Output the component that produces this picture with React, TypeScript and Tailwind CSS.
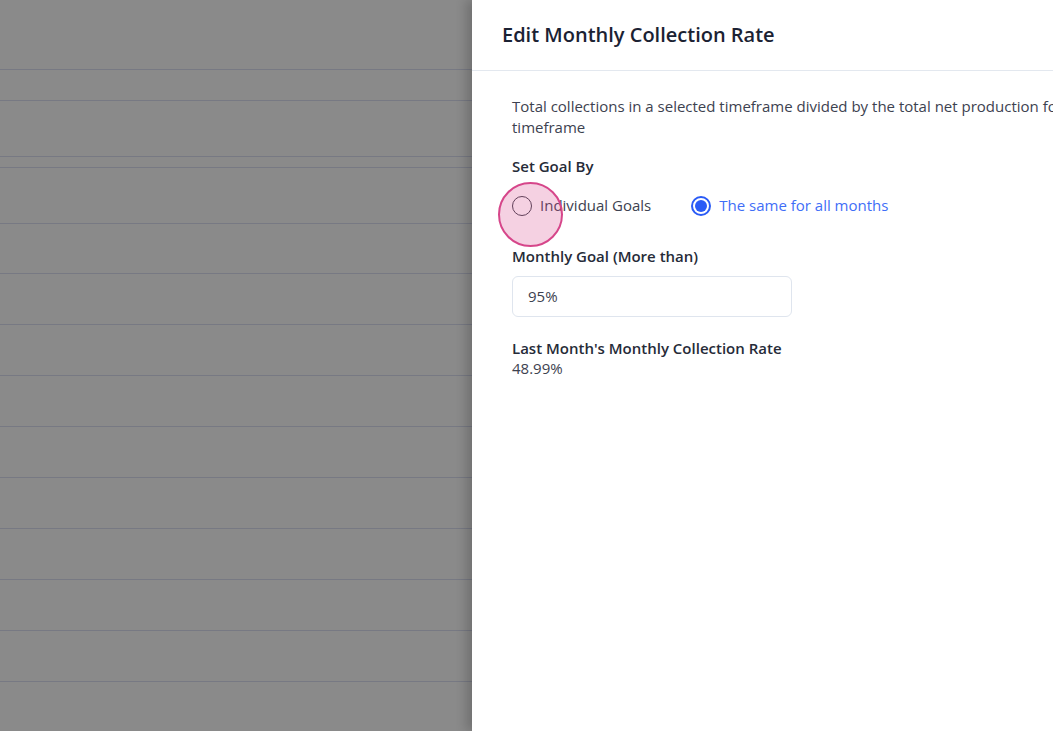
import React from 'react';

const rowHeights = [70, 31, 56, 11, 56, 50, 51, 51, 51, 51, 51, 51, 51, 51, 51];

const RadioOption = ({ label, checked }: { label: string; checked?: boolean }) => (
  <label className="flex items-center gap-2 cursor-pointer">
    {checked ? (
      <span className="flex h-[20px] w-[20px] items-center justify-center rounded-full border-2 border-[#2a5bf6]">
        <span className="h-[12px] w-[12px] rounded-full bg-[#2a5bf6]" />
      </span>
    ) : (
      <span className="h-[20px] w-[20px] rounded-full border border-[#3b3f4a]" />
    )}
    <span className={checked ? 'text-[#3f6ef7]' : 'text-[#3d4250]'}>{label}</span>
  </label>
);

export default function App() {
  return (
    <div
      className="flex h-[731px] w-full overflow-hidden"
      style={{ fontFamily: '"Open Sans", "Noto Sans", sans-serif' }}
    >
      {/* dimmed table behind the drawer */}
      <div className="flex w-[472px] shrink-0 flex-col bg-[#8a8a8a]">
        {rowHeights.map((h, i) => (
          <div
            key={i}
            className="w-full shrink-0 border-b border-[#777983]"
            style={{ height: h }}
          />
        ))}
      </div>

      {/* drawer */}
      <div className="relative w-[760px] shrink-0 bg-white shadow-[-6px_0_10px_rgba(0,0,0,0.18)]">
        <div className="flex h-[71px] items-center border-b border-[#e3e8ef] px-[30px]">
          <h2 className="text-[20px] font-semibold text-[#1b2233]">Edit Monthly Collection Rate</h2>
        </div>

        <div className="px-[40px] pt-[25px] text-[15px] leading-[21px] text-[#3d4250]">
          <p className="w-[680px]">
            Total collections in a selected timeframe divided by the total net production for the selected
            timeframe
          </p>

          <div className="mt-[18px] font-semibold text-[#262b38]">Set Goal By</div>
          <div className="mt-[18px] flex items-center gap-[40px]">
            <RadioOption label="Individual Goals" />
            <RadioOption label="The same for all months" checked />
          </div>

          <div className="mt-[30px] font-semibold text-[#262b38]">Monthly Goal (More than)</div>
          <div className="mt-[9px] flex h-[41px] w-[280px] items-center rounded-md border border-[#dfe5ee] px-[15px] text-[#3d4250]">
            95%
          </div>

          <div className="mt-[21px] font-semibold text-[#262b38]">Last Month's Monthly Collection Rate</div>
          <div className="leading-[19px]">48.99%</div>
        </div>

        {/* tap indicator */}
        <div className="pointer-events-none absolute left-[26px] top-[182px] h-[65px] w-[65px] rounded-full border-2 border-[#d6468a] bg-[#d6468a]/25" />
      </div>
    </div>
  );
}
